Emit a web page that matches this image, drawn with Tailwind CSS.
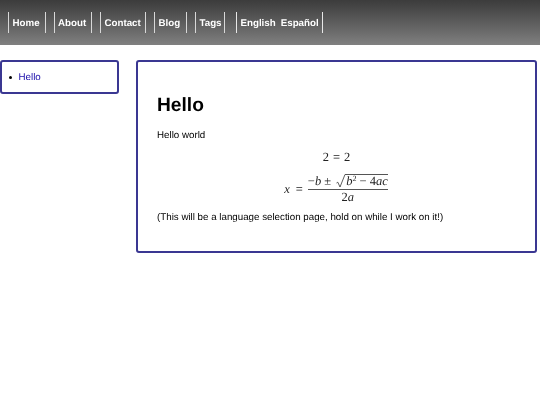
<!DOCTYPE html>
<html>
<head>
<meta charset="utf-8">
<script src="https://cdn.jsdelivr.net/npm/@tailwindcss/browser@4"></script>
</head>
<body class="bg-white text-black font-['Liberation_Sans',sans-serif] text-[9.75px] [text-rendering:geometricPrecision] blur-[0.3px]">
<nav class="h-[45px] bg-gradient-to-b from-[#3c3c3c] to-[#808080] flex items-center pl-[8px] text-white font-bold text-[9.75px]">
  <a class="h-[21px] w-[37.5px] flex items-center pl-[3.5px] pt-[3px] border-x border-[#d8d8d8]">Home</a>
  <a class="ml-[8px] h-[21px] w-[38.5px] flex items-center pl-[3.5px] pt-[3px] border-x border-[#d8d8d8]">About</a>
  <a class="ml-[8px] h-[21px] w-[46px] flex items-center pl-[3.5px] pt-[3px] border-x border-[#d8d8d8]">Contact</a>
  <a class="ml-[8px] h-[21px] w-[33px] flex items-center pl-[3.5px] pt-[3px] border-x border-[#d8d8d8]">Blog</a>
  <a class="ml-[8px] h-[21px] w-[30px] flex items-center pl-[3.5px] pt-[3px] border-x border-[#d8d8d8]">Tags</a>
  <div class="ml-[10.5px] h-[21px] w-[87px] flex items-center gap-[5px] pl-[4px] pt-[3px] border-x border-[#e8e8e8]"><a>English</a><a>Español</a></div>
</nav>
<div class="flex items-start gap-[17px] pt-[15px] pr-[3px]">
  <aside class="w-[119px] h-[34px] shrink-0 border-2 border-[#3a3792] rounded-[3px] flex items-center pl-[7px]">
    <span class="w-[3px] h-[3px] rounded-full bg-black mr-[6.5px]"></span><a class="text-[#1a0dab] relative top-[1.5px]">Hello</a>
  </aside>
  <main class="flex-1 h-[193px] border-2 border-[#3a3792] rounded-[3px] pl-[19px] pr-[19px] pt-[32px]">
    <h1 class="font-bold text-[19.2px] leading-[24px]">Hello</h1>
    <p class="mt-[12px] leading-[12px]">Hello world</p>
    <div class="mt-[8px] h-[14px] flex items-center justify-center font-['Liberation_Serif',serif] text-[12.5px] text-[#222] gap-[4px]"><span>2</span><span>=</span><span>2</span></div>
    <div class="mt-[9px] pr-[1px] flex items-center justify-center font-['Liberation_Serif',serif] text-[12.5px] text-[#222]">
      <span class="italic mr-[6px]">x</span><span class="mr-[5px]">=</span>
      <span class="flex flex-col items-center w-[80px]">
        <span class="h-[17px] pb-[1px] flex items-end border-b border-[#555] w-full justify-between whitespace-nowrap leading-[14px]">
          <span>−<i>b</i> ±</span>
          <span class="flex items-end">
            <svg class="w-[10px] h-[14px] shrink-0" viewBox="0 0 10 14" fill="none" stroke="#333" stroke-width="0.8"><path d="M0.5 9 L1.8 8.2 L4 13 L9 0.5 H10"/></svg>
            <span class="border-t border-[#555] leading-[13px]"><i>b</i><sup class="text-[8px] leading-none">2</sup> − 4<i>ac</i></span>
          </span>
        </span>
        <span class="leading-[15px]">2<i>a</i></span>
      </span>
    </div>
    <p class="mt-[7px] leading-[12px]">(This will be a language selection page, hold on while I work on it!)</p>
  </main>
</div>
</body>
</html>
